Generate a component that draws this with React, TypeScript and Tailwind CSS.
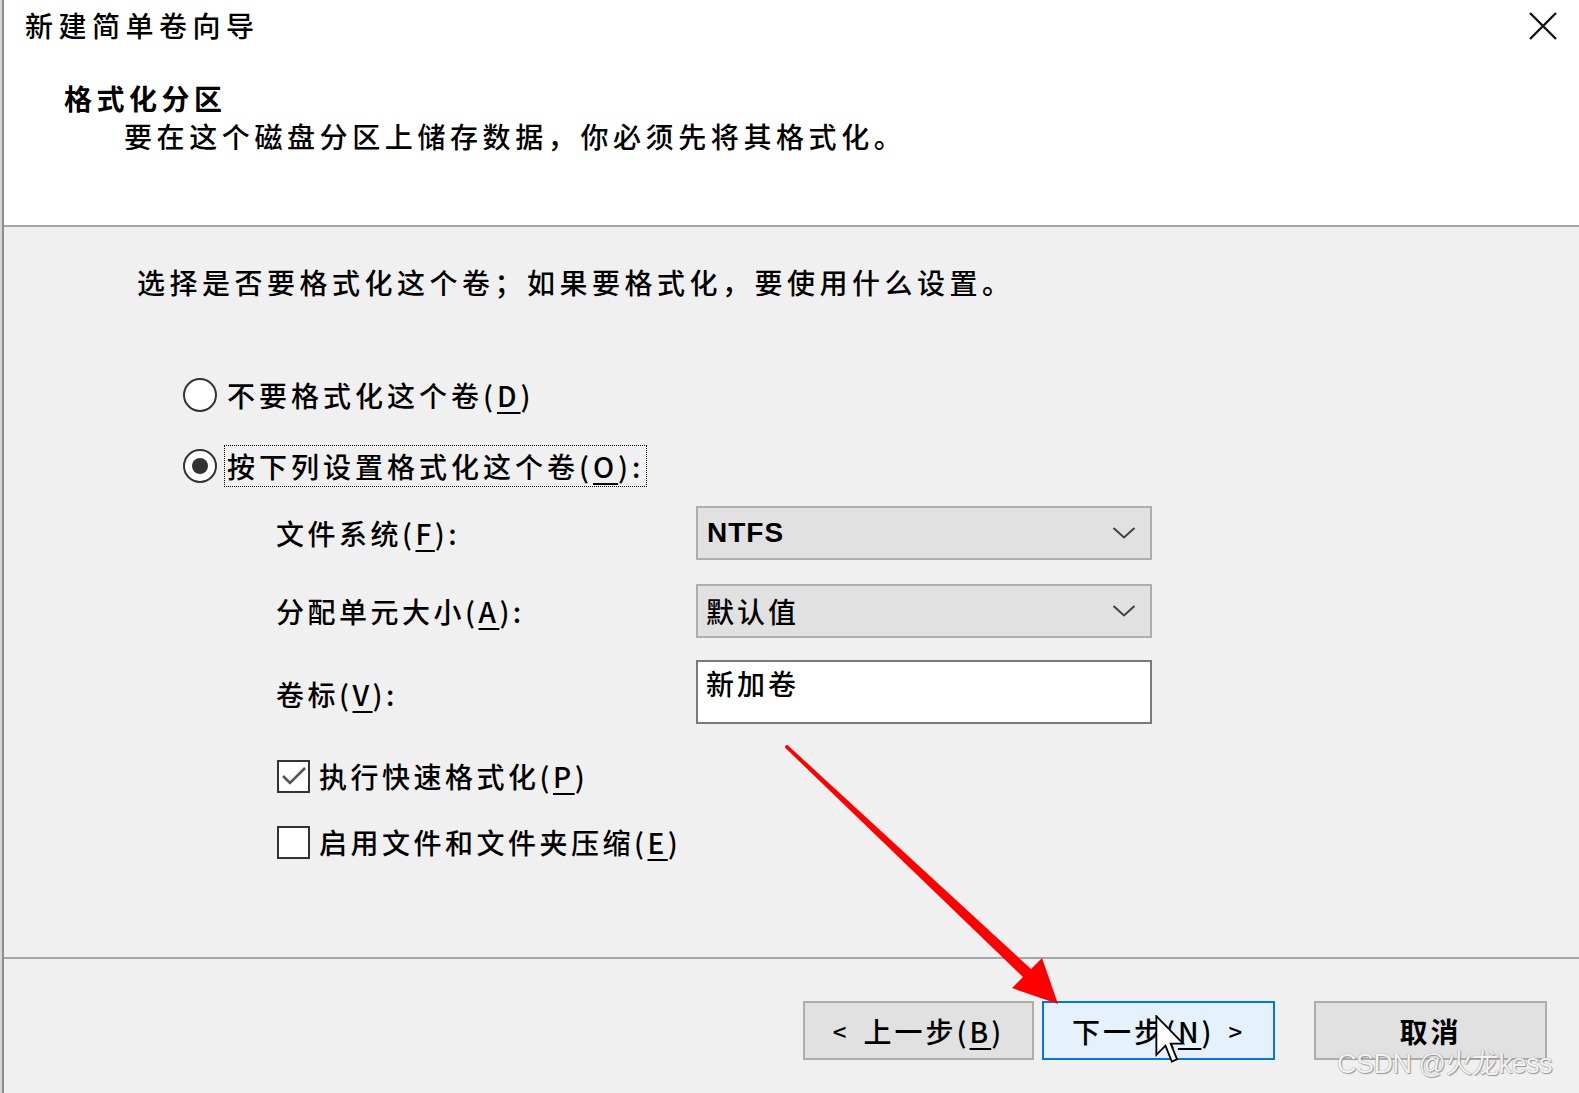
import React from "react";

const FONT = "font-['Noto_Sans_CJK_SC','Microsoft_YaHei',sans-serif]";

function U({ children }: { children: React.ReactNode }) {
  return <span className="underline decoration-[2px] underline-offset-[5px]">{children}</span>;
}

function Chevron() {
  return (
    <svg width="24" height="14" viewBox="0 0 24 14" className="shrink-0">
      <path d="M1.5 2 L12 11.5 L22.5 2" fill="none" stroke="#404040" strokeWidth="2" />
    </svg>
  );
}

export default function App() {
  return (
    <div className={`relative flex w-[1579px] h-[1093px] overflow-hidden bg-[#f0f0f0] text-black font-medium ${FONT}`}>
      <div className="w-[2px] bg-[#d6d6d6]" />
      <div className="w-[2px] bg-[#8c8c8c]" />
      <div className="flex flex-1 flex-col">
        {/* Header */}
        <div className="h-[225px] bg-white">
          <div className="flex items-start justify-between pl-[21px] pr-[21px] pt-[5px]">
            <div className="text-[28px] leading-[40px] tracking-[5.5px]">新建简单卷向导</div>
            <svg width="30" height="30" viewBox="0 0 30 30" className="mt-[6px]">
              <path d="M2 2 L28 28 M28 2 L2 28" stroke="#111" strokeWidth="2.4" fill="none" />
            </svg>
          </div>
          <div className="mt-[35px] pl-[60px] text-[28px] font-bold leading-[36px] tracking-[4.5px]">格式化分区</div>
          <div className="mt-[2px] pl-[120px] text-[28px] leading-[36px] tracking-[4.6px]">
            要在这个磁盘分区上储存数据，你必须先将其格式化。
          </div>
        </div>
        <div className="h-[2px] bg-[#a5a5a5]" />
        {/* Body */}
        <div className="flex h-[730px] flex-col">
          <div className="mt-[35px] pl-[133px] text-[28px] leading-[40px] tracking-[4.5px]">
            选择是否要格式化这个卷；如果要格式化，要使用什么设置。
          </div>
          <div className="mt-[73px] flex h-[40px] items-center pl-[179px]">
            <div className="h-[34px] w-[34px] rounded-full border-[2px] border-[#333] bg-white" />
            <div className="ml-[10px] text-[28px] leading-[40px] tracking-[4px]">
              不要格式化这个卷(<U>D</U>)
            </div>
          </div>
          <div className="mt-[30px] flex h-[42px] items-center pl-[179px]">
            <div className="flex h-[34px] w-[34px] items-center justify-center rounded-full border-[2px] border-[#333] bg-white">
              <div className="h-[16px] w-[16px] rounded-full bg-[#333]" />
            </div>
            <div className="ml-[7px] h-[42px] border border-dotted border-black pl-[2px] pr-[2px] text-[28px] leading-[40px] tracking-[4px]">
              按下列设置格式化这个卷(<U>O</U>):
            </div>
          </div>
          <div className="mt-[19px] grid grid-cols-[420px_456px] gap-y-[24px] pl-[272px]">
            <div className="flex h-[54px] items-center text-[28px] tracking-[3.5px]">
              文件系统(<U>F</U>):
            </div>
            <div className="flex h-[54px] items-center justify-between border-[2px] border-[#adadad] bg-[#e1e1e1] pl-[9px] pr-[14px]">
              <span className="text-[28px] font-bold tracking-[1px] font-['Liberation_Sans',sans-serif]">NTFS</span>
              <Chevron />
            </div>
            <div className="flex h-[54px] items-center text-[28px] tracking-[3.5px]">
              分配单元大小(<U>A</U>):
            </div>
            <div className="flex h-[54px] items-center justify-between border-[2px] border-[#adadad] bg-[#e1e1e1] pl-[8px] pr-[14px]">
              <span className="text-[28px] tracking-[3px]">默认值</span>
              <Chevron />
            </div>
            <div className="flex h-[64px] items-center text-[28px] tracking-[3.5px]">
              卷标(<U>V</U>):
            </div>
            <div className="-mt-[2px] h-[64px] border-[2px] border-[#7a7a7a] bg-white pl-[8px] pt-[1px] text-[28px] leading-[40px] tracking-[3px]">
              新加卷
            </div>
          </div>
          <div className="mt-[30px] flex h-[40px] items-center pl-[273px]">
            <div className="flex h-[33px] w-[33px] items-center justify-center border-[2px] border-[#333] bg-white">
              <svg width="26" height="20" viewBox="0 0 26 20">
                <path d="M2 10 L9 17 L24 2" fill="none" stroke="#555" strokeWidth="2.6" />
              </svg>
            </div>
            <div className="ml-[9px] text-[28px] leading-[40px] tracking-[3.5px]">
              执行快速格式化(<U>P</U>)
            </div>
          </div>
          <div className="mt-[26px] flex h-[40px] items-center pl-[273px]">
            <div className="h-[33px] w-[33px] border-[2px] border-[#333] bg-white" />
            <div className="ml-[9px] text-[28px] leading-[40px] tracking-[3.5px]">
              启用文件和文件夹压缩(<U>E</U>)
            </div>
          </div>
        </div>
        <div className="h-[2px] bg-[#a5a5a5]" />
        {/* Footer */}
        <div className="flex flex-1 items-start justify-end pr-[32px] pt-[42px]">
          <button className="flex h-[59px] w-[231px] items-center justify-center border-[2px] border-[#adadad] bg-[#e1e1e1] text-[28px] tracking-[3px]">
            <span className="mr-[14px] text-[24px]">&lt;</span>上一步(<U>B</U>)
          </button>
          <button className="ml-[8px] flex h-[59px] w-[233px] items-center justify-center border-[2px] border-[#0078d7] bg-[#e5f1fb] text-[28px] tracking-[3px]">
            下一步(<U>N</U>)<span className="ml-[14px] text-[24px]">&gt;</span>
          </button>
          <button className="ml-[39px] flex h-[59px] w-[233px] items-center justify-center border-[2px] border-[#adadad] bg-[#e1e1e1] text-[28px] font-semibold tracking-[3px]">
            取消
          </button>
        </div>
      </div>

      {/* Red annotation arrow */}
      <svg className="pointer-events-none absolute left-0 top-0" width="1579" height="1093" viewBox="0 0 1579 1093">
        <polygon
          points="788,745.5 1031,969 1042,958 1058,1004 1012,988 1023,977 786,748.5"
          fill="#ff0000"
        />
        <circle cx="787" cy="747" r="2" fill="#ff0000" />
      </svg>

      {/* Mouse cursor */}
      <svg className="pointer-events-none absolute left-[1155px] top-[1015px]" width="30" height="50" viewBox="0 0 13 22">
        <path d="M0.5 0.5 L0.5 17.5 L4.5 13.5 L7.3 20.5 L9.6 19.5 L6.8 12.6 L12.3 12.6 Z" fill="white" stroke="black" strokeWidth="0.8" />
      </svg>

      {/* Watermark */}
      <div className="pointer-events-none absolute left-[1337px] top-[1045px] whitespace-nowrap text-[27px] font-normal leading-[38px] tracking-[-0.5px] text-white/90 font-['Liberation_Sans','Noto_Sans_CJK_SC',sans-serif] [text-shadow:0_0_1px_#777,1px_1px_1px_#999]">
        CSDN @火龙kess
      </div>
    </div>
  );
}
